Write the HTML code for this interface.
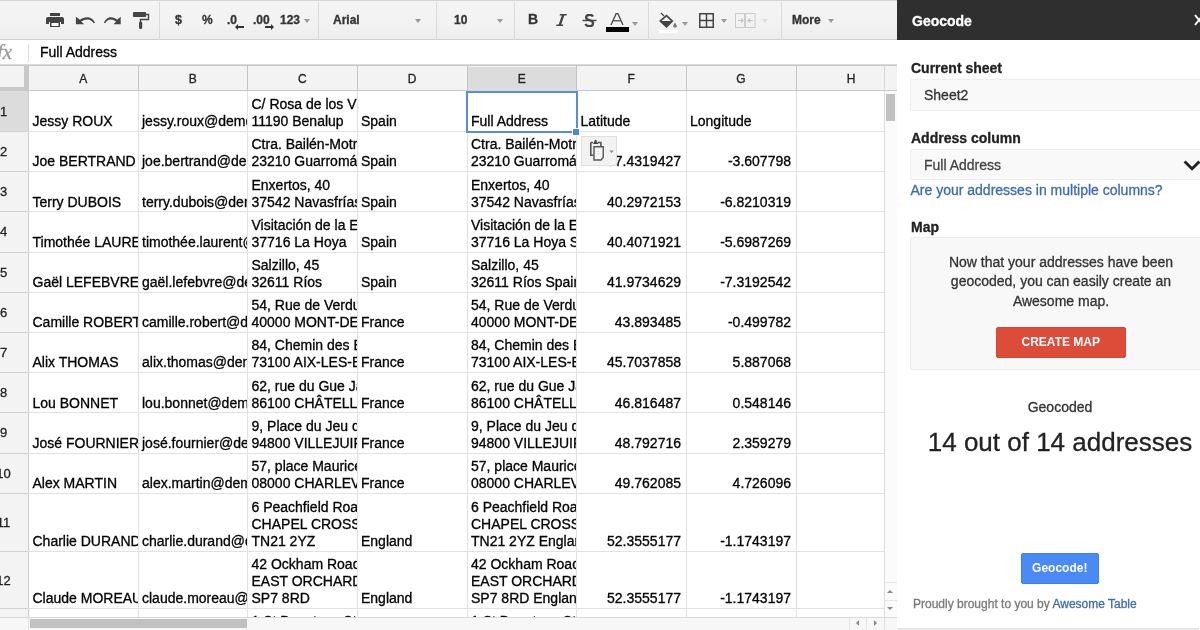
<!DOCTYPE html>
<html><head><meta charset="utf-8">
<style>
*{margin:0;padding:0;box-sizing:border-box}
html,body{width:1200px;height:630px;overflow:hidden;background:#fff;font-family:"Liberation Sans",sans-serif;color:#000}
body{will-change:transform;-webkit-text-stroke:0.3px currentColor}
.abs{position:absolute}
#tb{position:absolute;left:0;top:0;width:898px;height:40px;background:linear-gradient(#f4f4f4,#f2f2f2 60%,#ededed);border-top:1px solid #d4d4d4;border-bottom:1px solid #cfcfcf}
.sep{position:absolute;top:1px;width:1px;height:38px;background:#dadada}
.tt{position:absolute;font-weight:bold;font-size:12px;color:#333;line-height:14px;top:12px}
.dd{position:absolute;top:20px;width:0;height:0;border-left:3.5px solid transparent;border-right:3.5px solid transparent;border-top:4px solid #999}
#fb{position:absolute;left:0;top:40px;width:898px;height:25px;background:#fff;border-bottom:1px solid #d9d9d9}
#hdr{position:absolute;left:0;top:65px;width:884px;height:26px;background:#f3f3f3;border-top:1px solid #c9c9c9;border-bottom:1px solid #c9c9c9}
.ch{position:absolute;top:1px;height:25px;line-height:25px;text-align:center;font-size:12px;color:#222}
.rh{position:absolute;left:-18px;width:43px;text-align:center;font-size:13px;color:#222;padding-top:0.5px}
.c{position:absolute;overflow:hidden;font-size:14px;color:#000}
.t{position:absolute;left:0;right:0;bottom:1.35px;line-height:17px;white-space:nowrap}
.vl{position:absolute;width:1px;background:#e2e2e2}
.hl{position:absolute;left:28px;width:856px;height:1px;background:#e2e2e2}
.hlr{position:absolute;left:0;width:28px;height:1px;background:#d0d0d0}
#sb{position:absolute;left:897px;top:0;width:303px;height:630px;background:#fff}
.lbl{position:absolute;left:14px;font-weight:bold;font-size:14px;color:#222;line-height:16px}
.inp{position:absolute;left:13px;width:300px;background:#f9f9f9;border:1px solid #eeeeee;border-radius:2px}
</style></head><body>

<!-- toolbar -->
<div id="tb">
  <!-- print -->
  <svg class="abs" style="left:46px;top:11px" width="18" height="16" viewBox="0 0 18 16">
    <rect x="4" y="1" width="10" height="3" fill="#444"/>
    <path d="M2 5 h14 a2 2 0 0 1 2 2 v5 h-3 v-2 h-12 v2 h-3 v-5 a2 2 0 0 1 2 -2z" fill="#444"/>
    <path d="M4 10 h10 v5 h-10z" fill="#444"/>
    <rect x="5.5" y="11" width="7" height="3" fill="#fff"/>
  </svg>
  <!-- undo -->
  <svg class="abs" style="left:74.5px;top:14.5px" width="20" height="9" viewBox="0 0 22 11" preserveAspectRatio="none">
    <path d="M1 1 v9 h9 l-3.2 -3.2 C9 5 11 4.2 13.5 4.2 C17 4.2 19.5 6.3 20.5 9 L22 8.4 C20.8 4.6 17.5 1.5 13.5 1.5 C10.2 1.5 7.6 2.7 5.4 4.6 Z" fill="#444"/>
  </svg>
  <!-- redo -->
  <svg class="abs" style="left:103.5px;top:14.5px" width="17.5" height="9" viewBox="0 0 22 11" preserveAspectRatio="none">
    <g transform="translate(22,0) scale(-1,1)">
    <path d="M1 1 v9 h9 l-3.2 -3.2 C9 5 11 4.2 13.5 4.2 C17 4.2 19.5 6.3 20.5 9 L22 8.4 C20.8 4.6 17.5 1.5 13.5 1.5 C10.2 1.5 7.6 2.7 5.4 4.6 Z" fill="#444"/>
    </g>
  </svg>
  <!-- paint format -->
  <svg class="abs" style="left:132px;top:9.5px" width="18" height="19" viewBox="0 0 18 19">
    <rect x="1" y="1" width="13" height="5" rx="0.8" fill="#444"/>
    <path d="M14 3.5 h2.5 v5 h-8 v3" stroke="#444" stroke-width="1.4" fill="none"/>
    <rect x="7" y="10.5" width="3.2" height="7.5" rx="1.5" fill="#444"/>
  </svg>
  <div class="sep" style="left:159px"></div>
  <div class="tt" style="left:175px;font-size:12.5px">$</div>
  <div class="tt" style="left:202px">%</div>
  <div class="tt" style="left:227px">.0</div>
  <svg class="abs" style="left:235px;top:23px" width="9" height="6" viewBox="0 0 9 6"><path d="M0 3 L3 0 V2 H9 V4 H3 V6 Z" fill="#333"/></svg>
  <div class="tt" style="left:253px">.00</div>
  <svg class="abs" style="left:264.5px;top:23px" width="9" height="6" viewBox="0 0 9 6"><path d="M9 3 L6 0 V2 H0 V4 H6 V6 Z" fill="#333"/></svg>
  <div class="tt" style="left:280px">123</div>
  <div class="dd" style="left:303.5px;top:17.5px"></div>
  <div class="sep" style="left:318px"></div>
  <div class="tt" style="left:333px">Arial</div>
  <div class="dd" style="left:415px;top:17.5px"></div>
  <div class="sep" style="left:436px"></div>
  <div class="tt" style="left:454px">10</div>
  <div class="dd" style="left:497px;top:17.5px"></div>
  <div class="sep" style="left:514px"></div>
  <!-- B I S A -->
  <div class="tt" style="left:528px;font-size:14px;top:11px">B</div>
  <svg class="abs" style="left:555px;top:13px" width="13" height="12" viewBox="0 0 13 12"><path d="M5 0 H12 L11.5 1.6 H9.3 L6.2 10.4 H8.3 L7.8 12 H1 L1.5 10.4 H3.7 L6.8 1.6 H4.5 Z" fill="#444"/></svg>
  <svg class="abs" style="left:582px;top:13px" width="15" height="13" viewBox="0 0 15 13">
    <path d="M11 2.5 C10.2 1.2 9 0.8 7.6 0.8 C5.6 0.8 4.1 1.8 4.1 3.5 C4.1 5 5.2 5.6 7.5 6.2 C9.8 6.8 11 7.5 11 9.2 C11 11 9.5 12.2 7.4 12.2 C5.6 12.2 4.2 11.5 3.4 10" stroke="#444" stroke-width="2.3" fill="none"/>
    <rect x="0.5" y="5.8" width="14" height="1.4" fill="#444"/>
  </svg>
  <svg class="abs" style="left:610px;top:12px" width="14" height="12" viewBox="0 0 14 12"><path d="M1 12 L6.2 0.5 H7.8 L13 12" stroke="#444" stroke-width="1.3" fill="none"/><path d="M3.3 7.8 H10.7" stroke="#444" stroke-width="1.2"/></svg>
  <div class="abs" style="left:606px;top:26px;width:23px;height:5px;background:#000"></div>
  <div class="dd" style="left:632px;top:21px"></div>
  <div class="sep" style="left:648px"></div>
  <!-- paint bucket -->
  <svg class="abs" style="left:658px;top:11px" width="20" height="21" viewBox="0 0 20 21">
    <path d="M3 1 L6 4" stroke="#444" stroke-width="1.3"/>
    <path d="M1 9 L8.5 2.5 L15.5 9 L8.5 16 Z" fill="#444"/>
    <path d="M3.5 9 L8.5 4.8 L13 9 Z" fill="#f1f1f1"/>
    <path d="M17 10.5 C17 10.5 15.2 13 15.2 14 C15.2 15 16 15.6 17 15.6 C18 15.6 18.8 15 18.8 14 C18.8 13 17 10.5 17 10.5 Z" fill="#777"/>
    <rect x="1" y="18" width="18" height="3" fill="#fdfdfd"/>
  </svg>
  <div class="dd" style="left:682px;top:21px"></div>
  <!-- borders -->
  <svg class="abs" style="left:699px;top:11.5px" width="15" height="15" viewBox="0 0 15 15"><rect x="0.75" y="0.75" width="13.5" height="13.5" stroke="#444" stroke-width="1.5" fill="none"/><path d="M7.5 1 V14 M1 7.5 H14" stroke="#444" stroke-width="1.4"/></svg>
  <div class="dd" style="left:721px;top:17.5px"></div>
  <!-- merge -->
  <svg class="abs" style="left:735px;top:12px" width="21" height="15" viewBox="0 0 21 15"><rect x="0.5" y="0.5" width="9" height="14" stroke="#ccc" fill="none"/><rect x="10.5" y="0.5" width="9.5" height="14" stroke="#ccc" fill="none"/><path d="M3 7.5 H8 M6 5.5 L8 7.5 L6 9.5 M18 7.5 H13 M15 5.5 L13 7.5 L15 9.5" stroke="#c4c4c4" stroke-width="1.2" fill="none"/></svg>
  <div class="dd" style="left:762px;top:17.5px;border-top-color:#ddd"></div>
  <div class="sep" style="left:781px"></div>
  <div class="tt" style="left:792px">More</div>
  <div class="dd" style="left:828px;top:17.5px"></div>
</div>

<!-- formula bar -->
<div id="fb">
  <div class="abs" style="left:-3px;top:0px;font-family:'Liberation Serif',serif;font-style:italic;font-size:21px;color:#9a9a9a;line-height:24px">fx</div>
  <div class="abs" style="left:28px;top:4px;width:1px;height:18px;background:#ddd"></div>
  <div class="abs" style="left:40px;top:3.7px;font-size:14px;line-height:17px;color:#000">Full Address</div>
</div>

<!-- column headers -->
<div id="hdr">
<div class="ch" style="left:28.50px;width:109.50px;background:transparent">A</div>
<div class="ch" style="left:138.00px;width:109.50px;background:transparent">B</div>
<div class="ch" style="left:247.50px;width:109.50px;background:transparent">C</div>
<div class="ch" style="left:357.00px;width:110.00px;background:transparent">D</div>
<div class="ch" style="left:467.00px;width:109.50px;background:#dcdcdc">E</div>
<div class="ch" style="left:576.50px;width:109.50px;background:transparent">F</div>
<div class="ch" style="left:686.00px;width:110.00px;background:transparent">G</div>
<div class="ch" style="left:796.00px;width:110.00px;background:transparent">H</div>
</div>
<!-- corner -->
<div class="abs" style="left:0;top:66px;width:24px;height:21px;background:#f3f3f3"></div>
<div class="abs" style="left:24px;top:65px;width:4.5px;height:26px;background:#c8c8c8"></div>
<div class="abs" style="left:0;top:87px;width:28.5px;height:4px;background:#c8c8c8"></div>

<!-- row headers -->
<div class="abs" style="left:0;top:91px;width:28px;height:539px;background:#f3f3f3;overflow:hidden">
<div class="abs" style="left:0;top:-91px;width:28px;height:720px">
<div class="abs" style="left:0;top:91.00px;width:28px;height:40.50px;background:#dcdcdc"></div><div class="rh" style="top:91.00px;height:40.50px;line-height:40.50px">1</div>
<div class="abs" style="left:0;top:131.50px;width:28px;height:40.20px;background:#f3f3f3"></div><div class="rh" style="top:131.50px;height:40.20px;line-height:40.20px">2</div>
<div class="abs" style="left:0;top:171.70px;width:28px;height:40.20px;background:#f3f3f3"></div><div class="rh" style="top:171.70px;height:40.20px;line-height:40.20px">3</div>
<div class="abs" style="left:0;top:211.90px;width:28px;height:40.20px;background:#f3f3f3"></div><div class="rh" style="top:211.90px;height:40.20px;line-height:40.20px">4</div>
<div class="abs" style="left:0;top:252.10px;width:28px;height:40.20px;background:#f3f3f3"></div><div class="rh" style="top:252.10px;height:40.20px;line-height:40.20px">5</div>
<div class="abs" style="left:0;top:292.30px;width:28px;height:40.20px;background:#f3f3f3"></div><div class="rh" style="top:292.30px;height:40.20px;line-height:40.20px">6</div>
<div class="abs" style="left:0;top:332.50px;width:28px;height:40.20px;background:#f3f3f3"></div><div class="rh" style="top:332.50px;height:40.20px;line-height:40.20px">7</div>
<div class="abs" style="left:0;top:372.70px;width:28px;height:40.20px;background:#f3f3f3"></div><div class="rh" style="top:372.70px;height:40.20px;line-height:40.20px">8</div>
<div class="abs" style="left:0;top:412.90px;width:28px;height:40.20px;background:#f3f3f3"></div><div class="rh" style="top:412.90px;height:40.20px;line-height:40.20px">9</div>
<div class="abs" style="left:0;top:453.10px;width:28px;height:40.20px;background:#f3f3f3"></div><div class="rh" style="top:453.10px;height:40.20px;line-height:40.20px">10</div>
<div class="abs" style="left:0;top:493.30px;width:28px;height:58.10px;background:#f3f3f3"></div><div class="rh" style="top:493.30px;height:58.10px;line-height:58.10px">11</div>
<div class="abs" style="left:0;top:551.40px;width:28px;height:57.10px;background:#f3f3f3"></div><div class="rh" style="top:551.40px;height:57.10px;line-height:57.10px">12</div>
<div class="abs" style="left:0;top:608.50px;width:28px;height:56.50px;background:#f3f3f3"></div><div class="rh" style="top:608.50px;height:56.50px;line-height:56.50px">13</div>
</div>
</div>
<div class="abs" style="left:28px;top:91px;width:1px;height:526px;background:#cdcdcd"></div>

<!-- grid -->
<div class="abs" style="left:0;top:0;width:884px;height:617px;overflow:hidden">
<div class="c" style="left:28.50px;top:91.00px;width:109.50px;height:40.50px;text-align:left;"><div class="t" style="padding-left:4px;">Jessy ROUX</div></div>
<div class="c" style="left:138.00px;top:91.00px;width:109.50px;height:40.50px;text-align:left;"><div class="t" style="padding-left:4px;">jessy.roux@demo.com</div></div>
<div class="c" style="left:247.50px;top:91.00px;width:109.50px;height:40.50px;text-align:left;"><div class="t" style="padding-left:4px;">C/ Rosa de los Vientos<br>11190 Benalup</div></div>
<div class="c" style="left:357.00px;top:91.00px;width:110.00px;height:40.50px;text-align:left;"><div class="t" style="padding-left:4px;">Spain</div></div>
<div class="c" style="left:467.00px;top:91.00px;width:109.50px;height:40.50px;text-align:left;"><div class="t" style="padding-left:4px;">Full Address</div></div>
<div class="c" style="left:576.50px;top:91.00px;width:109.50px;height:40.50px;text-align:left;"><div class="t" style="padding-left:4px;">Latitude</div></div>
<div class="c" style="left:686.00px;top:91.00px;width:110.00px;height:40.50px;text-align:left;"><div class="t" style="padding-left:4px;">Longitude</div></div>
<div class="c" style="left:28.50px;top:131.50px;width:109.50px;height:40.20px;text-align:left;"><div class="t" style="padding-left:4px;">Joe BERTRAND</div></div>
<div class="c" style="left:138.00px;top:131.50px;width:109.50px;height:40.20px;text-align:left;"><div class="t" style="padding-left:4px;">joe.bertrand@demo.com</div></div>
<div class="c" style="left:247.50px;top:131.50px;width:109.50px;height:40.20px;text-align:left;"><div class="t" style="padding-left:4px;">Ctra. Bailén-Motril<br>23210 Guarromán</div></div>
<div class="c" style="left:357.00px;top:131.50px;width:110.00px;height:40.20px;text-align:left;"><div class="t" style="padding-left:4px;">Spain</div></div>
<div class="c" style="left:467.00px;top:131.50px;width:109.50px;height:40.20px;text-align:left;"><div class="t" style="padding-left:4px;">Ctra. Bailén-Motril<br>23210 Guarromán Spain</div></div>
<div class="c" style="left:576.50px;top:131.50px;width:109.50px;height:40.20px;text-align:right;"><div class="t" style="padding-right:5px;">37.4319427</div></div>
<div class="c" style="left:686.00px;top:131.50px;width:110.00px;height:40.20px;text-align:right;"><div class="t" style="padding-right:5px;">-3.607798</div></div>
<div class="c" style="left:28.50px;top:171.70px;width:109.50px;height:40.20px;text-align:left;"><div class="t" style="padding-left:4px;">Terry DUBOIS</div></div>
<div class="c" style="left:138.00px;top:171.70px;width:109.50px;height:40.20px;text-align:left;"><div class="t" style="padding-left:4px;">terry.dubois@demo.com</div></div>
<div class="c" style="left:247.50px;top:171.70px;width:109.50px;height:40.20px;text-align:left;"><div class="t" style="padding-left:4px;">Enxertos, 40<br>37542 Navasfrías</div></div>
<div class="c" style="left:357.00px;top:171.70px;width:110.00px;height:40.20px;text-align:left;"><div class="t" style="padding-left:4px;">Spain</div></div>
<div class="c" style="left:467.00px;top:171.70px;width:109.50px;height:40.20px;text-align:left;"><div class="t" style="padding-left:4px;">Enxertos, 40<br>37542 Navasfrías Spain</div></div>
<div class="c" style="left:576.50px;top:171.70px;width:109.50px;height:40.20px;text-align:right;"><div class="t" style="padding-right:5px;">40.2972153</div></div>
<div class="c" style="left:686.00px;top:171.70px;width:110.00px;height:40.20px;text-align:right;"><div class="t" style="padding-right:5px;">-6.8210319</div></div>
<div class="c" style="left:28.50px;top:211.90px;width:109.50px;height:40.20px;text-align:left;"><div class="t" style="padding-left:4px;">Timothée LAURENT</div></div>
<div class="c" style="left:138.00px;top:211.90px;width:109.50px;height:40.20px;text-align:left;"><div class="t" style="padding-left:4px;">timothée.laurent@demo.com</div></div>
<div class="c" style="left:247.50px;top:211.90px;width:109.50px;height:40.20px;text-align:left;"><div class="t" style="padding-left:4px;">Visitación de la Encina<br>37716 La Hoya</div></div>
<div class="c" style="left:357.00px;top:211.90px;width:110.00px;height:40.20px;text-align:left;"><div class="t" style="padding-left:4px;">Spain</div></div>
<div class="c" style="left:467.00px;top:211.90px;width:109.50px;height:40.20px;text-align:left;"><div class="t" style="padding-left:4px;">Visitación de la Encina<br>37716 La Hoya Spain</div></div>
<div class="c" style="left:576.50px;top:211.90px;width:109.50px;height:40.20px;text-align:right;"><div class="t" style="padding-right:5px;">40.4071921</div></div>
<div class="c" style="left:686.00px;top:211.90px;width:110.00px;height:40.20px;text-align:right;"><div class="t" style="padding-right:5px;">-5.6987269</div></div>
<div class="c" style="left:28.50px;top:252.10px;width:109.50px;height:40.20px;text-align:left;"><div class="t" style="padding-left:4px;">Gaël LEFEBVRE</div></div>
<div class="c" style="left:138.00px;top:252.10px;width:109.50px;height:40.20px;text-align:left;"><div class="t" style="padding-left:4px;">gaël.lefebvre@demo.com</div></div>
<div class="c" style="left:247.50px;top:252.10px;width:109.50px;height:40.20px;text-align:left;"><div class="t" style="padding-left:4px;">Salzillo, 45<br>32611 Ríos</div></div>
<div class="c" style="left:357.00px;top:252.10px;width:110.00px;height:40.20px;text-align:left;"><div class="t" style="padding-left:4px;">Spain</div></div>
<div class="c" style="left:467.00px;top:252.10px;width:109.50px;height:40.20px;text-align:left;"><div class="t" style="padding-left:4px;">Salzillo, 45<br>32611 Ríos Spain</div></div>
<div class="c" style="left:576.50px;top:252.10px;width:109.50px;height:40.20px;text-align:right;"><div class="t" style="padding-right:5px;">41.9734629</div></div>
<div class="c" style="left:686.00px;top:252.10px;width:110.00px;height:40.20px;text-align:right;"><div class="t" style="padding-right:5px;">-7.3192542</div></div>
<div class="c" style="left:28.50px;top:292.30px;width:109.50px;height:40.20px;text-align:left;"><div class="t" style="padding-left:4px;">Camille ROBERT</div></div>
<div class="c" style="left:138.00px;top:292.30px;width:109.50px;height:40.20px;text-align:left;"><div class="t" style="padding-left:4px;">camille.robert@demo.com</div></div>
<div class="c" style="left:247.50px;top:292.30px;width:109.50px;height:40.20px;text-align:left;"><div class="t" style="padding-left:4px;">54, Rue de Verdun<br>40000 MONT-DE-MARSAN</div></div>
<div class="c" style="left:357.00px;top:292.30px;width:110.00px;height:40.20px;text-align:left;"><div class="t" style="padding-left:4px;">France</div></div>
<div class="c" style="left:467.00px;top:292.30px;width:109.50px;height:40.20px;text-align:left;"><div class="t" style="padding-left:4px;">54, Rue de Verdun<br>40000 MONT-DE-MARSAN France</div></div>
<div class="c" style="left:576.50px;top:292.30px;width:109.50px;height:40.20px;text-align:right;"><div class="t" style="padding-right:5px;">43.893485</div></div>
<div class="c" style="left:686.00px;top:292.30px;width:110.00px;height:40.20px;text-align:right;"><div class="t" style="padding-right:5px;">-0.499782</div></div>
<div class="c" style="left:28.50px;top:332.50px;width:109.50px;height:40.20px;text-align:left;"><div class="t" style="padding-left:4px;">Alix THOMAS</div></div>
<div class="c" style="left:138.00px;top:332.50px;width:109.50px;height:40.20px;text-align:left;"><div class="t" style="padding-left:4px;">alix.thomas@demo.com</div></div>
<div class="c" style="left:247.50px;top:332.50px;width:109.50px;height:40.20px;text-align:left;"><div class="t" style="padding-left:4px;">84, Chemin des Bateliers<br>73100 AIX-LES-BAINS</div></div>
<div class="c" style="left:357.00px;top:332.50px;width:110.00px;height:40.20px;text-align:left;"><div class="t" style="padding-left:4px;">France</div></div>
<div class="c" style="left:467.00px;top:332.50px;width:109.50px;height:40.20px;text-align:left;"><div class="t" style="padding-left:4px;">84, Chemin des Bateliers<br>73100 AIX-LES-BAINS France</div></div>
<div class="c" style="left:576.50px;top:332.50px;width:109.50px;height:40.20px;text-align:right;"><div class="t" style="padding-right:5px;">45.7037858</div></div>
<div class="c" style="left:686.00px;top:332.50px;width:110.00px;height:40.20px;text-align:right;"><div class="t" style="padding-right:5px;">5.887068</div></div>
<div class="c" style="left:28.50px;top:372.70px;width:109.50px;height:40.20px;text-align:left;"><div class="t" style="padding-left:4px;">Lou BONNET</div></div>
<div class="c" style="left:138.00px;top:372.70px;width:109.50px;height:40.20px;text-align:left;"><div class="t" style="padding-left:4px;">lou.bonnet@demo.com</div></div>
<div class="c" style="left:247.50px;top:372.70px;width:109.50px;height:40.20px;text-align:left;"><div class="t" style="padding-left:4px;">62, rue du Gue Jacquet<br>86100 CHÂTELLERAULT</div></div>
<div class="c" style="left:357.00px;top:372.70px;width:110.00px;height:40.20px;text-align:left;"><div class="t" style="padding-left:4px;">France</div></div>
<div class="c" style="left:467.00px;top:372.70px;width:109.50px;height:40.20px;text-align:left;"><div class="t" style="padding-left:4px;">62, rue du Gue Jacquet<br>86100 CHÂTELLERAULT France</div></div>
<div class="c" style="left:576.50px;top:372.70px;width:109.50px;height:40.20px;text-align:right;"><div class="t" style="padding-right:5px;">46.816487</div></div>
<div class="c" style="left:686.00px;top:372.70px;width:110.00px;height:40.20px;text-align:right;"><div class="t" style="padding-right:5px;">0.548146</div></div>
<div class="c" style="left:28.50px;top:412.90px;width:109.50px;height:40.20px;text-align:left;"><div class="t" style="padding-left:4px;">José FOURNIER</div></div>
<div class="c" style="left:138.00px;top:412.90px;width:109.50px;height:40.20px;text-align:left;"><div class="t" style="padding-left:4px;">josé.fournier@demo.com</div></div>
<div class="c" style="left:247.50px;top:412.90px;width:109.50px;height:40.20px;text-align:left;"><div class="t" style="padding-left:4px;">9, Place du Jeu de Paume<br>94800 VILLEJUIF</div></div>
<div class="c" style="left:357.00px;top:412.90px;width:110.00px;height:40.20px;text-align:left;"><div class="t" style="padding-left:4px;">France</div></div>
<div class="c" style="left:467.00px;top:412.90px;width:109.50px;height:40.20px;text-align:left;"><div class="t" style="padding-left:4px;">9, Place du Jeu de Paume<br>94800 VILLEJUIF France</div></div>
<div class="c" style="left:576.50px;top:412.90px;width:109.50px;height:40.20px;text-align:right;"><div class="t" style="padding-right:5px;">48.792716</div></div>
<div class="c" style="left:686.00px;top:412.90px;width:110.00px;height:40.20px;text-align:right;"><div class="t" style="padding-right:5px;">2.359279</div></div>
<div class="c" style="left:28.50px;top:453.10px;width:109.50px;height:40.20px;text-align:left;"><div class="t" style="padding-left:4px;">Alex MARTIN</div></div>
<div class="c" style="left:138.00px;top:453.10px;width:109.50px;height:40.20px;text-align:left;"><div class="t" style="padding-left:4px;">alex.martin@demo.com</div></div>
<div class="c" style="left:247.50px;top:453.10px;width:109.50px;height:40.20px;text-align:left;"><div class="t" style="padding-left:4px;">57, place Maurice<br>08000 CHARLEVILLE</div></div>
<div class="c" style="left:357.00px;top:453.10px;width:110.00px;height:40.20px;text-align:left;"><div class="t" style="padding-left:4px;">France</div></div>
<div class="c" style="left:467.00px;top:453.10px;width:109.50px;height:40.20px;text-align:left;"><div class="t" style="padding-left:4px;">57, place Maurice<br>08000 CHARLEVILLE France</div></div>
<div class="c" style="left:576.50px;top:453.10px;width:109.50px;height:40.20px;text-align:right;"><div class="t" style="padding-right:5px;">49.762085</div></div>
<div class="c" style="left:686.00px;top:453.10px;width:110.00px;height:40.20px;text-align:right;"><div class="t" style="padding-right:5px;">4.726096</div></div>
<div class="c" style="left:28.50px;top:493.30px;width:109.50px;height:58.10px;text-align:left;"><div class="t" style="padding-left:4px;">Charlie DURAND</div></div>
<div class="c" style="left:138.00px;top:493.30px;width:109.50px;height:58.10px;text-align:left;"><div class="t" style="padding-left:4px;">charlie.durand@demo.com</div></div>
<div class="c" style="left:247.50px;top:493.30px;width:109.50px;height:58.10px;text-align:left;"><div class="t" style="padding-left:4px;">6 Peachfield Road<br>CHAPEL CROSS<br>TN21 2YZ</div></div>
<div class="c" style="left:357.00px;top:493.30px;width:110.00px;height:58.10px;text-align:left;"><div class="t" style="padding-left:4px;">England</div></div>
<div class="c" style="left:467.00px;top:493.30px;width:109.50px;height:58.10px;text-align:left;"><div class="t" style="padding-left:4px;">6 Peachfield Road<br>CHAPEL CROSS<br>TN21 2YZ England</div></div>
<div class="c" style="left:576.50px;top:493.30px;width:109.50px;height:58.10px;text-align:right;"><div class="t" style="padding-right:5px;">52.3555177</div></div>
<div class="c" style="left:686.00px;top:493.30px;width:110.00px;height:58.10px;text-align:right;"><div class="t" style="padding-right:5px;">-1.1743197</div></div>
<div class="c" style="left:28.50px;top:551.40px;width:109.50px;height:57.10px;text-align:left;"><div class="t" style="padding-left:4px;">Claude MOREAU</div></div>
<div class="c" style="left:138.00px;top:551.40px;width:109.50px;height:57.10px;text-align:left;"><div class="t" style="padding-left:4px;">claude.moreau@demo.com</div></div>
<div class="c" style="left:247.50px;top:551.40px;width:109.50px;height:57.10px;text-align:left;"><div class="t" style="padding-left:4px;">42 Ockham Road<br>EAST ORCHARD<br>SP7 8RD</div></div>
<div class="c" style="left:357.00px;top:551.40px;width:110.00px;height:57.10px;text-align:left;"><div class="t" style="padding-left:4px;">England</div></div>
<div class="c" style="left:467.00px;top:551.40px;width:109.50px;height:57.10px;text-align:left;"><div class="t" style="padding-left:4px;">42 Ockham Road<br>EAST ORCHARD<br>SP7 8RD England</div></div>
<div class="c" style="left:576.50px;top:551.40px;width:109.50px;height:57.10px;text-align:right;"><div class="t" style="padding-right:5px;">52.3555177</div></div>
<div class="c" style="left:686.00px;top:551.40px;width:110.00px;height:57.10px;text-align:right;"><div class="t" style="padding-right:5px;">-1.1743197</div></div>
<div class="c" style="left:28.50px;top:608.50px;width:109.50px;height:56.50px;text-align:left;"><div class="t" style="padding-left:4px;">Tom GIRARD</div></div>
<div class="c" style="left:138.00px;top:608.50px;width:109.50px;height:56.50px;text-align:left;"><div class="t" style="padding-left:4px;">tom.girard@demo.com</div></div>
<div class="c" style="left:247.50px;top:608.50px;width:109.50px;height:56.50px;text-align:left;"><div class="t" style="padding-left:4px;">1 St Dunstans Street<br>MILTON<br>AB1 2CD</div></div>
<div class="c" style="left:357.00px;top:608.50px;width:110.00px;height:56.50px;text-align:left;"><div class="t" style="padding-left:4px;">England</div></div>
<div class="c" style="left:467.00px;top:608.50px;width:109.50px;height:56.50px;text-align:left;"><div class="t" style="padding-left:4px;">1 St Dunstans Street<br>MILTON<br>AB1 2CD England</div></div>
<div class="c" style="left:576.50px;top:608.50px;width:109.50px;height:56.50px;text-align:right;"><div class="t" style="padding-right:5px;"></div></div>
<div class="c" style="left:686.00px;top:608.50px;width:110.00px;height:56.50px;text-align:right;"><div class="t" style="padding-right:5px;"></div></div>
<div class="vl" style="left:137.50px;top:65px;height:26px;background:#c6c6c6"></div>
<div class="vl" style="left:137.50px;top:91px;height:526px"></div>
<div class="vl" style="left:247.00px;top:65px;height:26px;background:#c6c6c6"></div>
<div class="vl" style="left:247.00px;top:91px;height:526px"></div>
<div class="vl" style="left:356.50px;top:65px;height:26px;background:#c6c6c6"></div>
<div class="vl" style="left:356.50px;top:91px;height:526px"></div>
<div class="vl" style="left:466.50px;top:65px;height:26px;background:#c6c6c6"></div>
<div class="vl" style="left:466.50px;top:91px;height:526px"></div>
<div class="vl" style="left:576.00px;top:65px;height:26px;background:#c6c6c6"></div>
<div class="vl" style="left:576.00px;top:91px;height:526px"></div>
<div class="vl" style="left:685.50px;top:65px;height:26px;background:#c6c6c6"></div>
<div class="vl" style="left:685.50px;top:91px;height:526px"></div>
<div class="vl" style="left:795.50px;top:65px;height:26px;background:#c6c6c6"></div>
<div class="vl" style="left:795.50px;top:91px;height:526px"></div>
<div class="hl" style="top:131.00px"></div>
<div class="hlr" style="top:131.00px"></div>
<div class="hl" style="top:171.20px"></div>
<div class="hlr" style="top:171.20px"></div>
<div class="hl" style="top:211.40px"></div>
<div class="hlr" style="top:211.40px"></div>
<div class="hl" style="top:251.60px"></div>
<div class="hlr" style="top:251.60px"></div>
<div class="hl" style="top:291.80px"></div>
<div class="hlr" style="top:291.80px"></div>
<div class="hl" style="top:332.00px"></div>
<div class="hlr" style="top:332.00px"></div>
<div class="hl" style="top:372.20px"></div>
<div class="hlr" style="top:372.20px"></div>
<div class="hl" style="top:412.40px"></div>
<div class="hlr" style="top:412.40px"></div>
<div class="hl" style="top:452.60px"></div>
<div class="hlr" style="top:452.60px"></div>
<div class="hl" style="top:492.80px"></div>
<div class="hlr" style="top:492.80px"></div>
<div class="hl" style="top:550.90px"></div>
<div class="hlr" style="top:550.90px"></div>
<div class="hl" style="top:608.00px"></div>
<div class="hlr" style="top:608.00px"></div>
<!-- selection -->
<div class="abs" style="left:466px;top:91px;width:111.5px;height:41.5px;border:2px solid #5b8bdc"></div>
<div class="abs" style="left:572px;top:127.5px;width:8px;height:8px;background:#4d86de;border:1px solid #fff"></div>
<!-- paste options -->
<div class="abs" style="left:581px;top:136px;width:36px;height:30px;background:#f2f2f2;border:1px solid #e0e0e0"></div>
<svg class="abs" style="left:589px;top:139px" width="28" height="24" viewBox="0 0 28 24">
  <path d="M1.8 3.5 V16.3 H4.5" stroke="#555" stroke-width="1.6" fill="none"/>
  <path d="M1.8 3.5 H4 M9 3.5 H11.9 V7.5" stroke="#555" stroke-width="1.6" fill="none"/>
  <path d="M4 5 L5.5 2.2 H7.8 L9.3 5 Z" fill="#444"/>
  <circle cx="6.6" cy="1.8" r="1.1" fill="#555"/>
  <path d="M5 7.8 H14.2 V18.5 L12 21 H5 Z" stroke="#555" stroke-width="1.4" fill="#fafafa"/>
  <path d="M6.5 10 H12.5 M6.5 12.5 H12.5 M6.5 15 H12.5" stroke="#e4e4e4" stroke-width="0.8"/>
  <path d="M20.3 11.5 L24.8 11.5 L22.55 14 Z" fill="#888"/>
</svg>
</div>

<!-- vertical scrollbar -->
<div class="abs" style="left:883.5px;top:65px;width:14px;height:565px;background:#fbfbfb;border-left:1px solid #dedede;border-right:1px solid #e2e2e2"></div>
<div class="abs" style="left:883.5px;top:65px;width:14px;height:26px;background:#f3f3f3;border-left:1px solid #d6d6d6;border-top:1px solid #c9c9c9;border-bottom:1px solid #c9c9c9"></div>
<div class="abs" style="left:886px;top:94px;width:9px;height:27px;background:#c1c1c1"></div>
<div class="abs" style="left:884px;top:582px;width:13px;height:1px;background:#e5e5e5"></div>
<div class="abs" style="left:884px;top:600px;width:13px;height:1px;background:#e5e5e5"></div>
<div class="abs" style="left:887px;top:590px;width:0;height:0;border-left:3.5px solid transparent;border-right:3.5px solid transparent;border-bottom:3.5px solid #888"></div>
<div class="abs" style="left:887px;top:607px;width:0;height:0;border-left:3.5px solid transparent;border-right:3.5px solid transparent;border-top:3.5px solid #888"></div>

<!-- horizontal scrollbar -->
<div class="abs" style="left:0;top:617px;width:898px;height:13px;background:#f7f7f7;border-top:1px solid #d9d9d9"></div>
<div class="abs" style="left:30px;top:619px;width:217px;height:9px;background:#c1c1c1"></div>
<div class="abs" style="left:28px;top:617px;width:1px;height:13px;background:#e0e0e0"></div>
<div class="abs" style="left:849px;top:618px;width:1px;height:12px;background:#e5e5e5"></div>
<div class="abs" style="left:866px;top:618px;width:1px;height:12px;background:#e5e5e5"></div>
<div class="abs" style="left:856px;top:620px;width:0;height:0;border-top:3.5px solid transparent;border-bottom:3.5px solid transparent;border-right:3.5px solid #888"></div>
<div class="abs" style="left:874px;top:620px;width:0;height:0;border-top:3.5px solid transparent;border-bottom:3.5px solid transparent;border-left:3.5px solid #888"></div>
<div class="abs" style="left:883.5px;top:617px;width:14px;height:13px;background:#f7f7f7;border-top:1px solid #d9d9d9;border-left:1px solid #e0e0e0"></div>

<!-- sidebar -->
<div id="sb">
  <div class="abs" style="left:0;top:0;width:303px;height:39.5px;background:#2f2f2f"></div>
  <div class="abs" style="left:15px;top:12.7px;font-weight:bold;font-size:14px;color:#fff;line-height:16px">Geocode</div>
  <svg class="abs" style="left:297px;top:14px" width="10" height="12" viewBox="0 0 10 12"><path d="M1 1 L9 11 M9 1 L1 11" stroke="#fff" stroke-width="2"/></svg>
  

  <div class="lbl" style="top:60.3px">Current sheet</div>
  <div class="inp" style="top:79px;height:32px"></div>
  <div class="abs" style="left:27px;top:87.3px;font-size:14px;color:#333;line-height:16px">Sheet2</div>

  <div class="lbl" style="top:130px">Address column</div>
  <div class="inp" style="top:149px;height:31px"></div>
  <div class="abs" style="left:27px;top:157px;font-size:14px;color:#444;line-height:16px">Full Address</div>
  <svg class="abs" style="left:286px;top:160px" width="18" height="11" viewBox="0 0 18 11"><path d="M1.6 1.6 L9 8.8 L16.4 1.6" stroke="#222" stroke-width="2.8" fill="none"/></svg>
  <div class="abs" style="left:13.5px;top:182px;font-size:14px;color:#3d6ab3;line-height:16px">Are your addresses in multiple columns?</div>

  <div class="lbl" style="top:219px">Map</div>
  <div class="abs" style="left:13px;top:237px;width:300px;height:132.5px;background:#f8f8f8;border:1px solid #ececec;border-radius:2px"></div>
  <div class="abs" style="left:14px;top:252.5px;width:300px;text-align:center;font-size:14px;color:#333;line-height:19.6px">Now that your addresses have been<br>geocoded, you can easily create an<br>Awesome map.</div>
  <div class="abs" style="left:99px;top:327px;width:129.5px;height:31px;background:#dd4b39;border-radius:2px;border:1px solid #d14836"></div>
  <div class="abs" style="left:99px;top:335px;width:129.5px;text-align:center;font-weight:bold;font-size:12px;color:#fff;line-height:14px;-webkit-text-stroke:0">CREATE MAP</div>

  <div class="abs" style="left:13px;top:399px;width:300px;text-align:center;font-size:14px;color:#333;line-height:16px">Geocoded</div>
  <div class="abs" style="left:13px;top:426.5px;width:300px;text-align:center;font-size:26px;color:#222;line-height:30px">14 out of 14 addresses</div>

  <div class="abs" style="left:124px;top:553px;width:77.5px;height:31px;background:#4a8af4;border-radius:2px;border:1px solid #3f7fe8"></div>
  <div class="abs" style="left:124px;top:561px;width:77.5px;text-align:center;font-weight:bold;font-size:12px;color:#fff;line-height:14px;-webkit-text-stroke:0">Geocode!</div>

  <div class="abs" style="left:16px;top:597px;font-size:12px;color:#7a7a7a;line-height:14px;white-space:nowrap">Proudly brought to you by <span style="color:#3d6ab3">Awesome Table</span></div>
  <div class="abs" style="left:0;top:627.5px;width:302px;height:2.5px;background:#e8e8e8"></div>
</div>
</body></html>
